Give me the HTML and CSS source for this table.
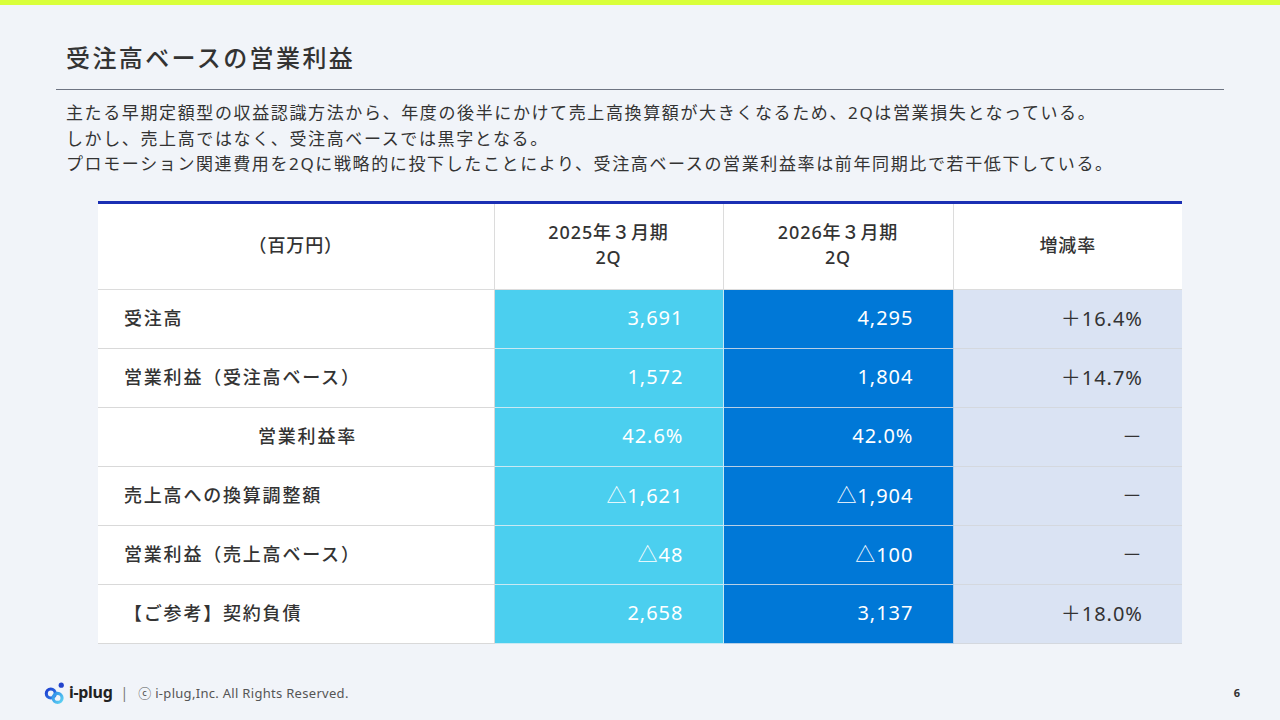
FILE: index.html
```html
<!DOCTYPE html>
<html lang="ja">
<head>
<meta charset="utf-8">
<title>受注高ベースの営業利益</title>
<link rel="stylesheet" href="styles.css">
</head>
<body>
<div class="topbar"></div>
<main class="slide">
  <header class="head">
    <h1 class="title">受注高ベースの営業利益</h1>
  </header>
  <div class="lead">
    <p>主たる早期定額型の収益認識方法から、年度の後半にかけて売上高換算額が大きくなるため、2Qは営業損失となっている。</p>
    <p>しかし、売上高ではなく、受注高ベースでは黒字となる。</p>
    <p>プロモーション関連費用を2Qに戦略的に投下したことにより、受注高ベースの営業利益率は前年同期比で若干低下している。</p>
  </div>
  <table class="pl">
    <colgroup>
      <col class="c1"><col class="c2"><col class="c3"><col class="c4">
    </colgroup>
    <thead>
      <tr>
        <th>（百万円）</th>
        <th>2025年３月期<br>2Q</th>
        <th>2026年３月期<br>2Q</th>
        <th>増減率</th>
      </tr>
    </thead>
    <tbody>
      <tr><td class="lbl">受注高</td><td class="v prev">3,691</td><td class="v cur">4,295</td><td class="v chg">＋16.4%</td></tr>
      <tr><td class="lbl">営業利益（受注高ベース）</td><td class="v prev">1,572</td><td class="v cur">1,804</td><td class="v chg">＋14.7%</td></tr>
      <tr><td class="lbl indent">営業利益率</td><td class="v prev">42.6%</td><td class="v cur">42.0%</td><td class="v chg">－</td></tr>
      <tr><td class="lbl">売上高への換算調整額</td><td class="v prev">△1,621</td><td class="v cur">△1,904</td><td class="v chg">－</td></tr>
      <tr><td class="lbl">営業利益（売上高ベース）</td><td class="v prev">△48</td><td class="v cur">△100</td><td class="v chg">－</td></tr>
      <tr><td class="lbl">【ご参考】契約負債</td><td class="v prev">2,658</td><td class="v cur">3,137</td><td class="v chg">＋18.0%</td></tr>
    </tbody>
  </table>
  <footer class="foot">
    <div class="brand">
      <svg class="mark" width="23" height="23" viewBox="0 0 22 22" aria-hidden="true">
        <defs>
          <linearGradient id="g1" x1="0" y1="0" x2="1" y2="1">
            <stop offset="0" stop-color="#1f3fd0"/>
            <stop offset="1" stop-color="#2f7fe6"/>
          </linearGradient>
          <linearGradient id="g2" x1="0" y1="0" x2="1" y2="1">
            <stop offset="0" stop-color="#2f8fe8"/>
            <stop offset="1" stop-color="#5fd3f2"/>
          </linearGradient>
        </defs>
        <circle cx="6.5" cy="12" r="4.3" fill="none" stroke="url(#g1)" stroke-width="3"/>
        <circle cx="13" cy="16.2" r="4.3" fill="none" stroke="url(#g2)" stroke-width="3"/>
        <circle cx="16.5" cy="4" r="2.5" fill="#2243cc"/>
      </svg>
      <span class="brand-name">i-plug</span>
    </div>
    <span class="sep">|</span>
    <span class="copy">ⓒ i-plug,Inc. All Rights Reserved.</span>
    <span class="pageno">6</span>
  </footer>
</main>
</body>
</html>
```
FILE: styles.css
```css
* { box-sizing: border-box; }
html, body { margin: 0; padding: 0; }
body {
  width: 1280px;
  height: 720px;
  overflow: hidden;
  background: #f1f4f9;
  font-family: "Noto Sans", "Noto Sans CJK JP", sans-serif;
  color: #333333;
}
.topbar {
  height: 5px;
  background: #d9ff3a;
}
.slide {
  display: flex;
  flex-direction: column;
  height: 715px;
}
.head {
  margin: 37px 56px 0 56px;
  padding: 0 0 15px 10px;
  border-bottom: 1px solid #6e7482;
}
.title {
  margin: 0;
  font-size: 24px;
  line-height: 32px;
  font-weight: 500;
  letter-spacing: 0.1em;
  color: #333333;
}
.lead {
  margin: 10px 56px 0 56px;
  padding-left: 10px;
}
.lead p {
  margin: 0;
  font-size: 17px;
  line-height: 25.5px;
  letter-spacing: 1.62px;
  color: #333333;
}
.pl {
  margin: 24px 0 0 98px;
  width: 1084px;
  border-collapse: collapse;
  table-layout: fixed;
  border-top: 3px solid #1a2fb3;
}
.c1 { width: 396px; }
.c2 { width: 229px; }
.c3 { width: 230px; }
.c4 { width: 229px; }
.pl th {
  height: 87px;
  background: #ffffff;
  font-size: 18px;
  font-weight: 500;
  line-height: 25px;
  letter-spacing: 0.05em;
  text-align: center;
  color: #333333;
  border: 1px solid #dcdcdc;
  border-top: none;
  padding: 0 0 2px 0;
}
.pl th:first-child { border-left: none; }
.pl th:last-child { border-right: none; }
.pl td {
  height: 59px;
  border: 1px solid #d9d9d9;
  padding: 0 0 3px 0;
}
.pl td:first-child { border-left: none; }
.pl td:last-child { border-right: none; }
.lbl {
  background: #ffffff;
  padding-left: 26px !important;
  font-size: 18px;
  font-weight: 500;
  letter-spacing: 0.1em;
  color: #333333;
}
.lbl.indent { padding-left: 160px !important; }
.v {
  text-align: right;
  font-size: 20px;
  letter-spacing: 0.05em;
  padding-right: 39px !important;
}
.prev { background: #4bcfef; color: #ffffff; border-color: #c9e9f3 !important; }
.cur { background: #0078d7; color: #ffffff; border-color: #b7cfe6 !important; }
.chg { background: #dae3f3; color: #333333; border-color: #d4d8de !important; }
.foot {
  margin-top: auto;
  margin-bottom: 16px;
  display: flex;
  align-items: center;
  padding: 0 40px 0 44px;
  height: 24px;
}
.brand {
  display: flex;
  align-items: center;
  gap: 2px;
}
.mark { display: block; }
.brand-name {
  font-family: "Noto Sans", sans-serif;
  font-weight: 700;
  font-size: 16px;
  color: #222222;
  letter-spacing: -0.3px;
}
.sep {
  margin-left: 8px;
  font-size: 14px;
  color: #777777;
}
.copy {
  margin-left: 10px;
  font-size: 13px;
  letter-spacing: 0.3px;
  color: #555555;
}
.pageno {
  margin-left: auto;
  font-size: 11px;
  font-weight: 700;
  color: #333333;
}
```
